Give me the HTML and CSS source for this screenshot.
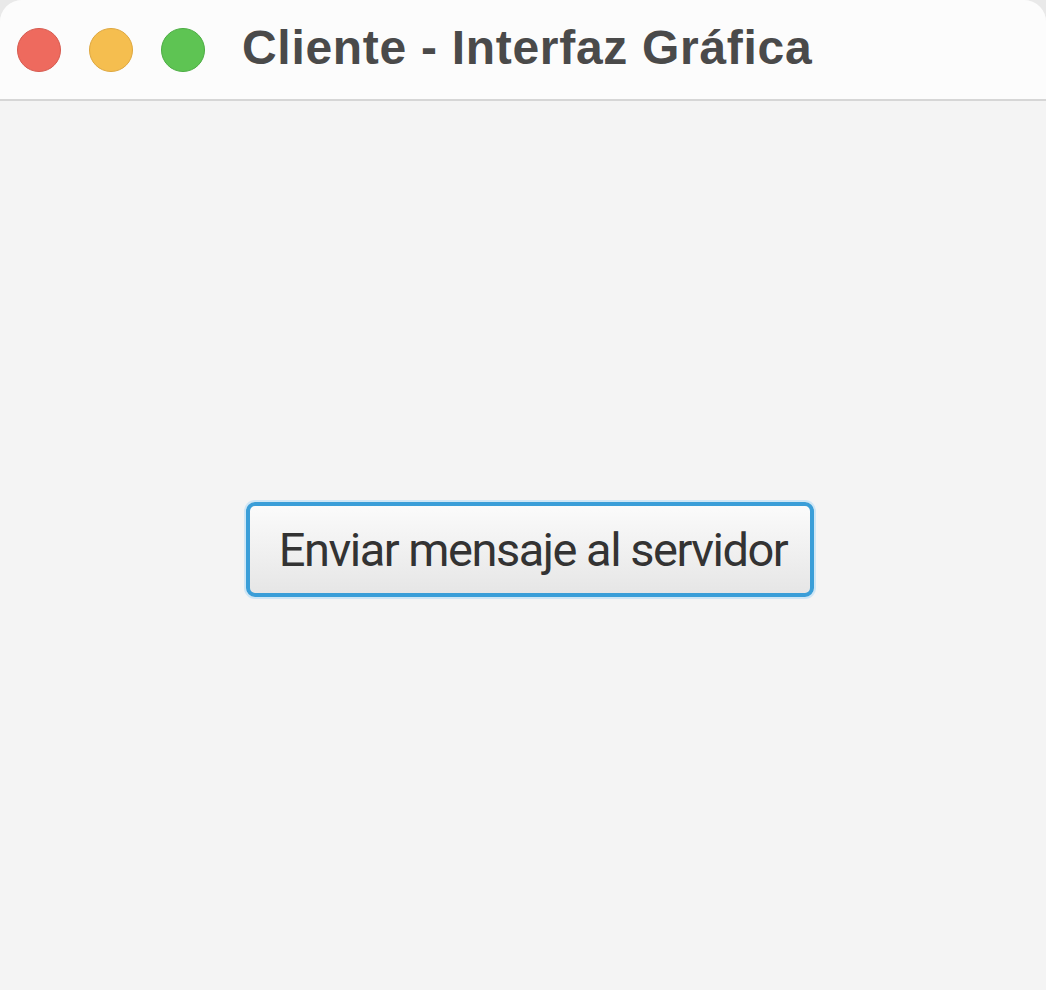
FILE: index.html
```html
<!DOCTYPE html>
<html>
<head>
<meta charset="utf-8">
<link rel="stylesheet" href="styles.css">
</head>
<body>
<div class="window">
  <div class="titlebar">
    <div class="lights">
      <span class="light red"></span>
      <span class="light yellow"></span>
      <span class="light green"></span>
    </div>
    <div class="title">Cliente - Interfaz Gráfica</div>
  </div>
  <div class="content">
    <button class="btn">Enviar mensaje al servidor</button>
  </div>
</div>
</body>
</html>
```
FILE: styles.css
```css
html, body {
  margin: 0;
  padding: 0;
  width: 1046px;
  height: 990px;
  background: #e9e9e9;
  overflow: hidden;
}
.window {
  width: 1046px;
  height: 990px;
  display: flex;
  flex-direction: column;
  background: #f4f4f4;
  border-radius: 22px 22px 0 0;
  overflow: hidden;
}
.titlebar {
  height: 101px;
  flex: none;
  background: #fcfcfc;
  border-bottom: 2px solid #d6d6d6;
  display: flex;
  align-items: center;
  box-sizing: border-box;
  padding-left: 17px;
}
.lights {
  display: flex;
  gap: 28px;
}
.light {
  width: 44px;
  height: 44px;
  border-radius: 50%;
  box-sizing: border-box;
}
.red { background: #ee6a5e; border: 1px solid #d65a4f; }
.yellow { background: #f5be4f; border: 1px solid #dea73e; }
.green { background: #5ec453; border: 1px solid #4cad43; }
.title {
  margin-left: 37px;
  font-family: "Liberation Sans", Arial, sans-serif;
  font-weight: bold;
  font-size: 48px;
  letter-spacing: 0.7px;
  color: #4a4a4a;
  margin-top: -4px;
}
.content {
  flex: 1;
  display: flex;
  align-items: center;
  justify-content: center;
  padding-top: 8px;
}
.btn {
  width: 568px;
  height: 95px;
  box-sizing: border-box;
  border: 4px solid #3a9ed8;
  border-radius: 9px;
  box-shadow: 0 0 0 2px #cfe6f5;
  background: linear-gradient(#fbfbfb, #e6e6e6);
  font-family: Roboto, "Noto Sans", sans-serif;
  font-size: 47px;
  letter-spacing: -1.5px;
  color: #333333;
  padding: 0 0 0 6px;
  margin-left: 14px;
}
```
